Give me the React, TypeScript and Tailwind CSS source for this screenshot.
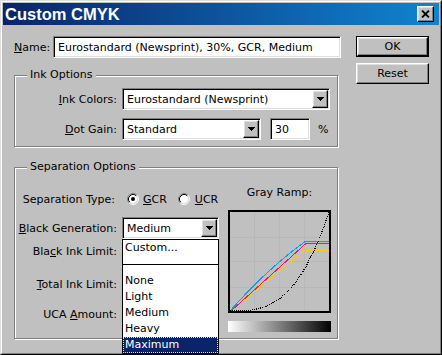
import React from 'react';

// classic 3D edges
const raised =
  'border border-t-white border-l-white border-r-black border-b-black shadow-[inset_-1px_-1px_0_#808080,inset_1px_1px_0_#dfdfdf]';
const sunken =
  'border border-t-[#808080] border-l-[#808080] border-r-white border-b-white shadow-[inset_1px_1px_0_#000,inset_-1px_-1px_0_#dfdfdf]';

const ArrowBtn: React.FC = () => (
  <div className={`w-[16px] h-full shrink-0 flex items-center justify-center bg-[#c0c0c0] ${raised}`}>
    <svg width="7" height="4" viewBox="0 0 7 4" shapeRendering="crispEdges">
      <path d="M0 0H7L3.5 4Z" fill="#000" />
    </svg>
  </div>
);

const Select: React.FC<{ value: string; className?: string }> = ({ value, className = '' }) => (
  <div className={`h-[22px] p-[1px] flex items-center bg-white ${sunken} ${className}`}>
    <div className="flex-1 pl-[3px] whitespace-nowrap overflow-hidden">{value}</div>
    <ArrowBtn />
  </div>
);

const Group: React.FC<{ title: string; className?: string; children: React.ReactNode }> = ({
  title,
  className = '',
  children,
}) => (
  <div className={`relative border border-[#808080] shadow-[inset_1px_1px_0_#fff,1px_1px_0_#fff] ${className}`}>
    <span className="absolute -top-[8px] left-[12px] px-[3px] bg-[#c0c0c0] leading-[13px]">{title}</span>
    {children}
  </div>
);

const Radio: React.FC<{ checked?: boolean }> = ({ checked }) => (
  <svg width="12" height="12" viewBox="0 0 12 12" className="shrink-0">
    <circle cx="6" cy="6" r="4.5" fill="#fff" />
    <path d="M2.11 9.89A5.5 5.5 0 0 1 9.89 2.11" fill="none" stroke="#808080" />
    <path d="M9.89 2.11A5.5 5.5 0 0 1 2.11 9.89" fill="none" stroke="#fff" />
    <path d="M2.82 9.18A4.5 4.5 0 0 1 9.18 2.82" fill="none" stroke="#000" />
    <path d="M9.18 2.82A4.5 4.5 0 0 1 2.82 9.18" fill="none" stroke="#dfdfdf" />
    {checked && <circle cx="6" cy="6" r="2" fill="#000" />}
  </svg>
);

const GrayRamp: React.FC = () => (
  <svg width="103" height="103" viewBox="0 0 103 103" shapeRendering="crispEdges" className="block">
    {[26, 51, 76].map((x) => (
      <line key={'v' + x} x1={x + 0.5} y1="2" x2={x + 0.5} y2="101" stroke="#b8b8b8" />
    ))}
    {[27, 51, 77].map((y) => (
      <line key={'h' + y} x1="2" y1={y + 0.5} x2="101" y2={y + 0.5} stroke="#b8b8b8" />
    ))}
    <path d="M3 101L77 40H101" fill="none" stroke="#ffcc00" />
    <path d="M3 101L78 33.5H101" fill="none" stroke="#e8186e" />
    <path d="M2 101Q40 58 78 31H101" fill="none" stroke="#0aa0d8" />
    <path d="M2 101C35 101 68 101 101 2" fill="none" stroke="#000" strokeWidth="1.2" strokeDasharray="1 1" />
    <rect x="1" y="1" width="101" height="101" fill="none" stroke="#000" strokeWidth="2" />
  </svg>
);

const menuItems = ['None', 'Light', 'Medium', 'Heavy'];

export default function App() {
  return (
    <div className="w-[442px] h-[355px] overflow-hidden bg-[#c0c0c0] text-black text-[11px] leading-[13px] font-['DejaVu_Sans',sans-serif] border border-t-[#dfdfdf] border-l-[#dfdfdf] border-r-black border-b-black">
      <div className="h-full border border-t-white border-l-white border-r-[#808080] border-b-[#808080] p-[1px] flex flex-col">
        {/* title bar */}
        <div className="h-[22px] shrink-0 flex items-center justify-between pl-[2px] pr-[5px] bg-[linear-gradient(to_right,#0a246a,#1084d0)]">
          <span className="text-white font-bold text-[16.5px] leading-[20px] font-['Liberation_Sans',sans-serif]">
            Custom CMYK
          </span>
          <div className={`w-[17px] h-[16px] flex items-center justify-center bg-[#c0c0c0] ${raised}`}>
            <svg width="9" height="8" viewBox="0 0 9 8">
              <path d="M1 0.5L8 7.5M8 0.5L1 7.5" stroke="#000" strokeWidth="1.8" />
            </svg>
          </div>
        </div>

        <div className="flex pt-[11px] pl-[11px]">
          <div className="w-[327px]">
            <div className="flex items-center h-[22px]">
              <span className="w-[39px]">
                <u>N</u>ame:
              </span>
              <div className={`flex-1 h-full bg-white flex items-center pl-[4px] whitespace-nowrap ${sunken}`}>
                Eurostandard (Newsprint), 30%, GCR, Medium
              </div>
            </div>

            <Group title="Ink Options" className="mt-[17px] w-[324px] h-[72px] pt-[12px]">
              <div className="flex items-center">
                <span className="w-[102px] text-right">
                  <u>I</u>nk Colors:
                </span>
                <Select value="Eurostandard (Newsprint)" className="ml-[5px] w-[208px]" />
              </div>
              <div className="flex items-center mt-[8px]">
                <span className="w-[102px] text-right">
                  <u>D</u>ot Gain:
                </span>
                <Select value="Standard" className="ml-[5px] w-[139px]" />
                <div className={`ml-[9px] w-[40px] h-[22px] bg-white flex items-center pl-[4px] ${sunken}`}>30</div>
                <span className="ml-[8px]">%</span>
              </div>
            </Group>

            <Group title="Separation Options" className="mt-[20px] w-[324px] h-[172px] flex">
              <div className="w-[213px] pt-[20px]">
                <div className="flex items-center h-[22px]">
                  <span className="w-[102px] text-right pr-[2px]">Separation Type:</span>
                  <span className="ml-[10px]">
                    <Radio checked />
                  </span>
                  <span className="ml-[4px]">
                    <u>G</u>CR
                  </span>
                  <span className="ml-[11px]">
                    <Radio />
                  </span>
                  <span className="ml-[5px]">
                    <u>U</u>CR
                  </span>
                </div>

                <div className="flex items-center mt-[7px]">
                  <span className="w-[102px] text-right">
                    <u>B</u>lack Generation:
                  </span>
                  <div className="relative ml-[5px] z-10">
                    <Select value="Medium" className="w-[97px]" />
                    <div className="absolute top-full left-0 w-[97px] bg-white border border-black">
                      <div className="h-[16px] leading-[16px] pl-[2px]">Custom...</div>
                      <div className="h-[17px] flex items-center">
                        <div className="w-full h-[1px] bg-black" />
                      </div>
                      {menuItems.map((m) => (
                        <div key={m} className="h-[16px] leading-[16px] pl-[2px]">
                          {m}
                        </div>
                      ))}
                      <div className="h-[16px] leading-[14px] pl-[1px] bg-[#0a246a] text-white border border-dotted border-[#f5db95]">
                        Maximum
                      </div>
                    </div>
                  </div>
                </div>

                <div className="flex items-center h-[22px] mt-[1px]">
                  <span className="w-[102px] text-right">
                    Bla<u>c</u>k Ink Limit:
                  </span>
                  <div className={`ml-[5px] w-[41px] h-full bg-white ${sunken}`} />
                </div>
                <div className="flex items-center h-[22px] mt-[11px]">
                  <span className="w-[102px] text-right">
                    <u>T</u>otal Ink Limit:
                  </span>
                  <div className={`ml-[5px] w-[41px] h-full bg-white ${sunken}`} />
                </div>
                <div className="flex items-center h-[22px] mt-[8px]">
                  <span className="w-[102px] text-right">
                    UCA <u>A</u>mount:
                  </span>
                  <div className={`ml-[5px] w-[41px] h-full bg-white ${sunken}`} />
                </div>
              </div>

              <div className="w-[103px] pt-[18px]">
                <div className="text-center">Gray Ramp:</div>
                <div className="mt-[11px]">
                  <GrayRamp />
                </div>
                <div className="mt-[8px] h-[11px] bg-[linear-gradient(to_right,#fff,#000)]" />
              </div>
            </Group>
          </div>

          <div className="ml-[15px] w-[73px] flex flex-col gap-[6px]">
            <div className="border border-black">
              <div className={`h-[19px] flex items-center justify-center bg-[#c0c0c0] ${raised}`}>OK</div>
            </div>
            <div className={`h-[21px] flex items-center justify-center bg-[#c0c0c0] ${raised}`}>Reset</div>
          </div>
        </div>
      </div>
    </div>
  );
}
